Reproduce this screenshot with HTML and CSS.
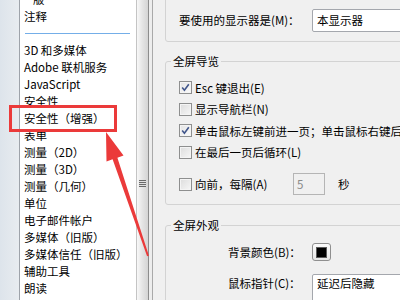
FILE: index.html
```html
<!DOCTYPE html>
<html lang="zh-CN">
<head>
<meta charset="utf-8">
<title>首选项</title>
<link rel="stylesheet" href="styles.css">
</head>
<body>
<div class="screen">
  <div class="edge"></div>
  <div class="list">
    <div class="list-inner">
      <div class="item indent">版</div>
      <div class="item">注释</div>
      <div class="sep"></div>
      <div class="item">3D 和多媒体</div>
      <div class="item">Adobe 联机服务</div>
      <div class="item">JavaScript</div>
      <div class="item">安全性</div>
      <div class="item">安全性（增强）</div>
      <div class="item">表单</div>
      <div class="item">测量（2D）</div>
      <div class="item">测量（3D）</div>
      <div class="item">测量（几何）</div>
      <div class="item">单位</div>
      <div class="item">电子邮件帐户</div>
      <div class="item">多媒体（旧版）</div>
      <div class="item">多媒体信任（旧版）</div>
      <div class="item">辅助工具</div>
      <div class="item">朗读</div>
    </div>
  </div>
  <div class="scroll">
    <div class="thumb"><span class="grip"></span></div>
  </div>
  <div class="panel">
    <div class="group g1">
      <div class="row">
        <span class="label-wide">要使用的显示器是(M)：</span>
        <span class="field">本显示器</span>
      </div>
    </div>
    <div class="group g2">
      <span class="legend">全屏导览</span>
      <div class="checks">
        <div class="check-row"><span class="box checked"><svg viewBox="0 0 13 13" width="13" height="13"><path d="M3.2 6.6 L5.4 9.2 L9.8 3.2" fill="none" stroke="#40558a" stroke-width="1.6"/></svg></span><span>Esc 键退出(E)</span></div>
        <div class="check-row"><span class="box"></span><span>显示导航栏(N)</span></div>
        <div class="check-row"><span class="box checked"><svg viewBox="0 0 13 13" width="13" height="13"><path d="M3.2 6.6 L5.4 9.2 L9.8 3.2" fill="none" stroke="#40558a" stroke-width="1.6"/></svg></span><span>单击鼠标左键前进一页；单击鼠标右键后退一页</span></div>
        <div class="check-row"><span class="box"></span><span>在最后一页后循环(L)</span></div>
        <div class="check-row gap"><span class="box"></span><span class="every">向前，每隔(A)</span><span class="num">5</span><span class="unit">秒</span></div>
      </div>
    </div>
    <div class="group g3">
      <span class="legend">全屏外观</span>
      <div class="look-row first">
        <span class="label-look">背景颜色(B)：</span>
        <span class="swatch"><span class="swatch-color"></span></span>
      </div>
      <div class="look-row second">
        <span class="label-look">鼠标指针(C)：</span>
        <span class="select">延迟后隐藏</span>
      </div>
    </div>
  </div>
  <div class="highlight"></div>
  <svg class="arrow" viewBox="0 0 400 300" width="400" height="300">
    <polygon points="106,132 123.5,155.6 117.4,157.7 148.9,255.7 147.1,256.3 112.6,159.3 106.5,161.4" fill="#eb3a3a"/>
  </svg>
</div>
</body>
</html>
```
FILE: styles.css
```css
* { box-sizing: border-box; }
html, body { margin: 0; padding: 0; }
body {
  width: 400px;
  height: 300px;
  overflow: hidden;
  font-family: "Noto Sans CJK SC", "Noto Sans", sans-serif;
  font-size: 11.5px;
  color: #000;
  background: #f0f0f0;
}
.screen {
  position: relative;
  display: flex;
  width: 400px;
  height: 300px;
  overflow: hidden;
}
.edge {
  width: 19px;
  flex: none;
  background: linear-gradient(to right, #dde4eb, #e8ecf0);
}
.list {
  width: 117px;
  flex: none;
  background: #fff;
  border-left: 1px solid #9ea3aa;
  overflow: hidden;
}
.list-inner { margin-top: -9px; }
.item {
  height: 17px;
  line-height: 17px;
  padding-left: 4px;
  white-space: nowrap;
}
.item.indent { padding-left: 13px; }
.sep {
  height: 17px;
  display: flex;
  align-items: center;
  padding: 0 6px 0 5px;
}
.sep::before {
  content: "";
  flex: 1;
  height: 1px;
  background: #74aee8;
}
.scroll {
  width: 16px;
  flex: none;
  display: flex;
  background: #ededed;
  border-left: 1px solid #c4c4c4;
}
.thumb {
  width: 12px;
  background: linear-gradient(to right, #f8f8f8, #e4e4e4 50%, #d4d4d4);
  border-right: 1px solid #8c8c8c;
  display: flex;
  justify-content: center;
  align-items: flex-start;
  padding-top: 180px;
}
.grip {
  width: 7px;
  height: 7px;
  background: repeating-linear-gradient(to bottom, #6a6a6a 0 1px, #e0e0e0 1px 2px);
}
.panel {
  flex: 1;
  min-width: 0;
  background: #f0f0f0;
  border-left: 1px solid #a9a9a9;
  padding-left: 12px;
  overflow: hidden;
}
.group {
  width: 300px;
  border: 1px solid #d3d3d3;
  border-radius: 3px;
  padding-left: 13px;
}
.g1 {
  margin-top: -12px;
  height: 54px;
  padding-top: 20px;
}
.row {
  display: flex;
  height: 23px;
  align-items: center;
}
.label-wide {
  width: 133px;
  flex: none;
  line-height: 23px;
  white-space: nowrap;
}
.field {
  width: 120px;
  height: 23px;
  flex: none;
  background: #fff;
  border: 1px solid #a4a7ad;
  border-radius: 2px;
  padding-left: 4px;
  line-height: 21px;
}
.g2 {
  margin-top: 19px;
  padding-bottom: 9px;
}
.legend {
  display: block;
  width: max-content;
  height: 16px;
  line-height: 16px;
  margin: -9px 0 0 -8px;
  padding: 0 2px;
  background: #f0f0f0;
}
.checks { margin-top: 8px; }
.check-row {
  display: flex;
  align-items: center;
  height: 21.5px;
  white-space: nowrap;
}
.check-row.gap {
  height: 22px;
  margin-top: 10px;
}
.box {
  width: 13px;
  height: 13px;
  flex: none;
  margin-right: 3px;
  border: 1px solid #8e8f8f;
  background: linear-gradient(135deg, #dcdcdc, #f7f7f7);
  box-shadow: inset 0 0 0 1px #f4f4f4;
  position: relative;
}
.box svg {
  position: absolute;
  left: -1px;
  top: -1px;
}
.box.checked { background: linear-gradient(135deg, #e4e4e4, #fbfbfb); }
.every { width: 98px; flex: none; }
.num {
  width: 32px;
  height: 22px;
  flex: none;
  border: 1px solid #b5b5b5;
  background: #f0f0f0;
  color: #8a8a8a;
  padding-left: 3px;
  line-height: 20px;
}
.unit { margin-left: 13px; }
.g3 {
  margin-top: 20px;
  height: 120px;
}
.look-row {
  display: flex;
  align-items: flex-start;
  padding-left: 49px;
}
.look-row.first {
  margin-top: 10px;
  height: 18px;
  align-items: center;
}
.look-row.second { margin-top: 13px; }
.label-look {
  width: 85px;
  flex: none;
  line-height: 19px;
  white-space: nowrap;
}
.look-row.first .label-look { line-height: 18px; }
.swatch {
  width: 19px;
  height: 18px;
  flex: none;
  margin-left: -1px;
  border: 1px solid #8f8f8f;
  border-radius: 3px;
  background: linear-gradient(to bottom, #fbfbfb, #e6e6e6);
  display: flex;
  align-items: center;
  justify-content: center;
}
.swatch-color {
  width: 11px;
  height: 11px;
  background: #000;
  border: 1px solid #5a5a5a;
}
.select {
  width: 120px;
  height: 30px;
  flex: none;
  margin-left: -1px;
  background: #fff;
  border: 1px solid #a4a7ad;
  border-radius: 2px;
  padding-left: 4px;
  line-height: 17px;
}
.highlight {
  position: absolute;
  left: 9px;
  top: 105px;
  width: 108px;
  height: 27px;
  border: 3px solid #eb3a3a;
}
.arrow {
  position: absolute;
  left: 0;
  top: 0;
  pointer-events: none;
}
```
